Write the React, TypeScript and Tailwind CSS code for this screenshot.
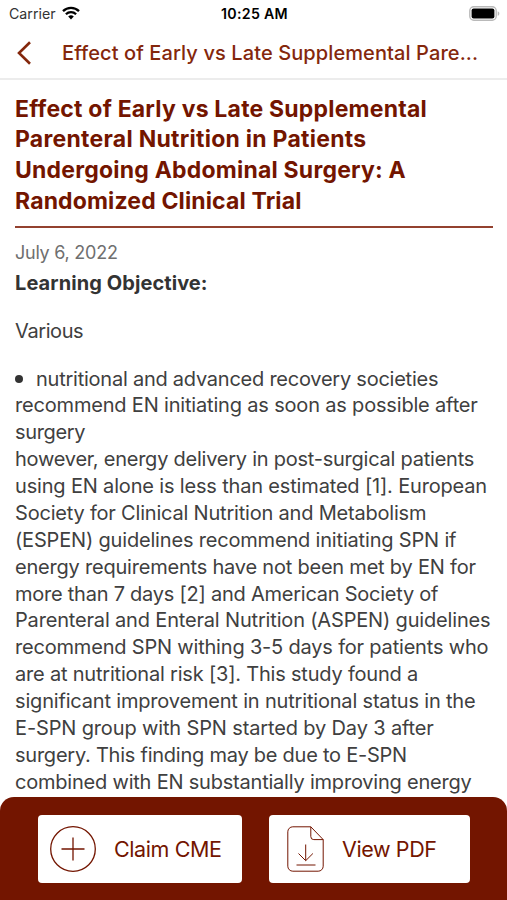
import React from "react";
import clsx from "clsx";

type Line = { text: string; tracking: string };

const titleLines: Line[] = [
  { text: "Effect of Early vs Late Supplemental", tracking: "tracking-[0.2px]" },
  { text: "Parenteral Nutrition in Patients", tracking: "tracking-[0.26px]" },
  { text: "Undergoing Abdominal Surgery: A", tracking: "tracking-[0.21px]" },
  { text: "Randomized Clinical Trial", tracking: "tracking-[0.14px]" },
];

const bodyLines: Line[] = [
  { text: "recommend EN initiating as soon as possible after", tracking: "tracking-[-0.18px]" },
  { text: "surgery", tracking: "tracking-[-0.35px]" },
  { text: "however, energy delivery in post-surgical patients", tracking: "tracking-[-0.24px]" },
  { text: "using EN alone is less than estimated [1]. European", tracking: "tracking-[-0.17px]" },
  { text: "Society for Clinical Nutrition and Metabolism", tracking: "tracking-[-0.2px]" },
  { text: "(ESPEN) guidelines recommend initiating SPN if", tracking: "tracking-[-0.18px]" },
  { text: "energy requirements have not been met by EN for", tracking: "tracking-[-0.21px]" },
  { text: "more than 7 days [2] and American Society of", tracking: "tracking-[-0.24px]" },
  { text: "Parenteral and Enteral Nutrition (ASPEN) guidelines", tracking: "tracking-[-0.17px]" },
  { text: "recommend SPN withing 3-5 days for patients who", tracking: "tracking-[-0.19px]" },
  { text: "are at nutritional risk [3]. This study found a", tracking: "tracking-[-0.2px]" },
  { text: "significant improvement in nutritional status in the", tracking: "tracking-[-0.18px]" },
  { text: "E-SPN group with SPN started by Day 3 after", tracking: "tracking-[-0.14px]" },
  { text: "surgery. This finding may be due to E-SPN", tracking: "tracking-[-0.24px]" },
  { text: "combined with EN substantially improving energy", tracking: "tracking-[-0.21px]" },
];

const StatusBar = () => (
  <div className="grid h-7 grid-cols-3 items-center pl-[9px] pr-[7px] text-[14.2px] text-black">
    <div className="flex items-center gap-[6px]">
      <span className="text-[#333]">Carrier</span>
      <svg className="-mt-[2px]" width="18" height="14" viewBox="0 0 18 14" fill="none" stroke="#000" strokeWidth="2.3">
        <path d="M1 5.1a11.4 11.4 0 0 1 16 0" />
        <path d="M3.9 8.2a7.3 7.3 0 0 1 10.2 0" />
        <path d="M9 13.4 6.2 10.6a4 4 0 0 1 5.6 0z" fill="#000" stroke="none" />
      </svg>
    </div>
    <span className="whitespace-nowrap text-center font-semibold tracking-[0.3px]">10:25 AM</span>
    <svg className="-mt-[2px] justify-self-end" width="31" height="15" viewBox="0 0 31 15">
      <rect x="0.8" y="0.8" width="26.4" height="13.4" rx="4" fill="#fff" stroke="#b9b9b9" strokeWidth="1.4" />
      <rect x="2.6" y="2.6" width="22.8" height="9.8" rx="2" fill="#000" />
      <path d="M28.7 5.2c2.2.8 2.2 3.8 0 4.6z" fill="#b9b9b9" />
    </svg>
  </div>
);

const Header = () => (
  <header className="flex h-[52px] items-center border-b-2 border-[#ececec] pb-px pl-[17px] text-[#84270c]">
    <button className="h-6 w-[14px]" aria-label="Back">
      <svg width="14" height="24" viewBox="0 0 14 24" fill="none" stroke="currentColor" strokeWidth="2.6">
        <path d="M13 1.2 2 12l11 10.8" />
      </svg>
    </button>
    <h1 className="ml-[31px] whitespace-nowrap text-[20px] font-medium tracking-[0.1px]">
      Effect of Early vs Late Supplemental Pare...
    </h1>
  </header>
);

const ClaimIcon = () => (
  <svg width="46" height="46" viewBox="0 0 46 46" fill="none" stroke="currentColor" strokeWidth="1.3">
    <circle cx="23" cy="23" r="22.3" />
    <path d="M23 11.5v23M11.5 23h23" />
  </svg>
);

const PdfIcon = () => (
  <svg width="37" height="46" viewBox="0 0 37 46" fill="none" stroke="currentColor" strokeWidth="1">
    <path d="M23.8.8H5.8a5 5 0 0 0-5 5v34.4a5 5 0 0 0 5 5h25.4a5 5 0 0 0 5-5V13.6z" />
    <path d="M23.8.8v9.8a3 3 0 0 0 3 3h9.4" />
    <path d="M18.7 18.5v16M11.5 27.5l7.2 7.2 7.2-7.2M9.5 39h19" />
  </svg>
);

const App = () => {
  return (
    <div className="flex h-[900px] w-[507px] flex-col overflow-hidden bg-white font-['Inter',sans-serif]">
      <StatusBar />
      <Header />

      <main className="min-h-0 flex-1 overflow-hidden pl-[15px] pr-[14px] pt-[13.5px] text-[#404040]">
        <h2 className="text-[23px] font-bold leading-[30.7px] text-[#731500]">
          {titleLines.map((line) => (
            <span key={line.text} className={clsx("block whitespace-nowrap", line.tracking)}>
              {line.text}
            </span>
          ))}
        </h2>
        <div className="mt-[10px] h-[1.5px] bg-[#93412f]" />
        <p className="mt-[11px] text-[18px] leading-[27px] tracking-[-0.25px] text-[#6f6f6f]">July 6, 2022</p>
        <div className="text-[20px] leading-[26.87px]">
          <p className="mt-[4px] font-bold tracking-[0.08px] text-[#333]">Learning Objective:</p>
          <p className="mt-[21px] tracking-[-0.4px]">Various</p>
          <div className="mt-[21px] flex items-center">
            <span className="mr-[13px] size-[8px] rounded-full bg-[#333]" />
            <span className="whitespace-nowrap tracking-[-0.24px]">nutritional and advanced recovery societies</span>
          </div>
          {bodyLines.map((line) => (
            <span key={line.text} className={clsx("block whitespace-nowrap", line.tracking)}>
              {line.text}
            </span>
          ))}
        </div>
      </main>

      <footer className="flex h-[103px] shrink-0 gap-[27px] rounded-t-[14px] bg-[#731500] pl-[38px] pt-[18px] text-[21.5px] tracking-[-0.4px] text-[#731500]">
        <button className="flex h-[68px] w-[204px] items-center gap-[18px] rounded-[4px] bg-white pl-[12px]">
          <ClaimIcon />
          <span className="whitespace-nowrap">Claim CME</span>
        </button>
        <button className="flex h-[68px] w-[201px] items-center gap-[18px] rounded-[4px] bg-white pl-[18px]">
          <PdfIcon />
          <span className="whitespace-nowrap">View PDF</span>
        </button>
      </footer>
    </div>
  );
};

export default App;
